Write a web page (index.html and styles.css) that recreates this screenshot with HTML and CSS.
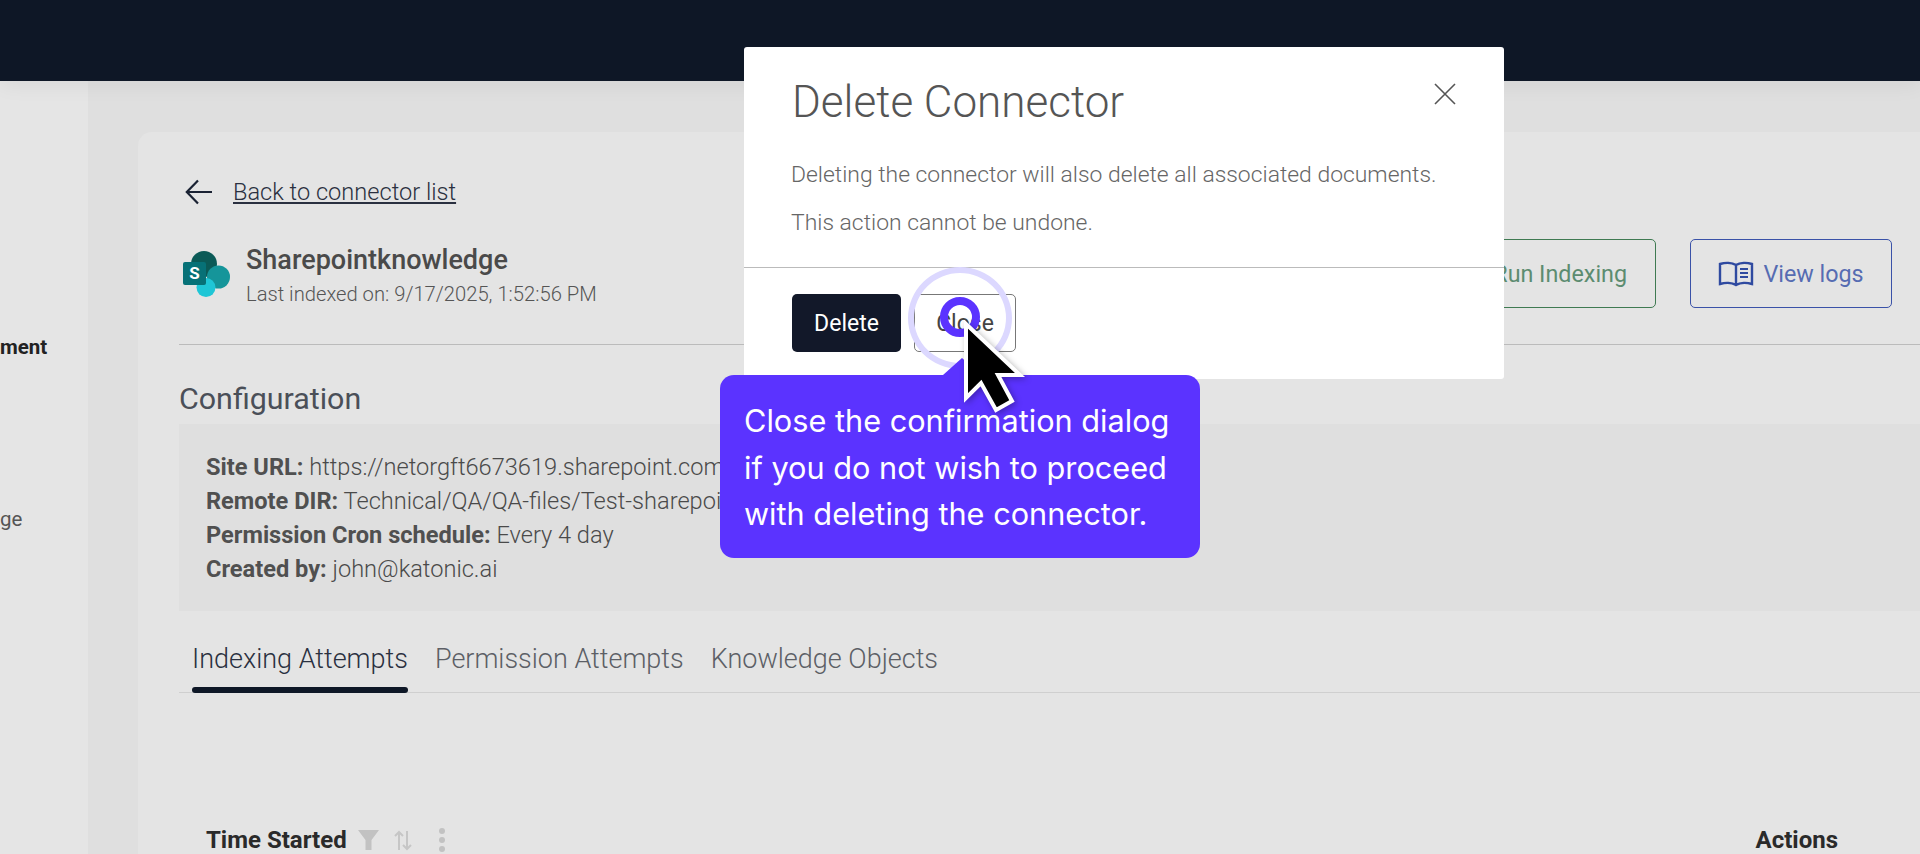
FILE: index.html
```html
<!DOCTYPE html>
<html lang="en">
<head>
    <meta charset="UTF-8">
    <meta name="viewport" content="width=device-width, initial-scale=1.0">
    <title>Delete Connector</title>
    <link rel="stylesheet" href="styles.css">
</head>
<body>
    <header class="topbar"></header>

    <div class="layout">
        <!-- Sidebar, cut off by the recording -->
        <aside class="sidebar">
            <div class="side-item side-active">ment</div>
            <div class="side-item">ge</div>
        </aside>

        <main class="content">
            <section class="panel">
                <a class="back-link" href="#">
                    <svg class="back-arrow" viewBox="0 0 28 26" width="28" height="26" fill="none" stroke="#1a2233" stroke-width="2.2">
                        <path d="M27 13H2M13 1.5 1.8 13 13 24.5"/>
                    </svg>
                    <span>Back to connector list</span>
                </a>

                <div class="connector-head">
                    <svg class="sp-logo" viewBox="0 0 48 48" width="48" height="48">
                        <circle cx="21" cy="13" r="13" fill="#0b5a57"/>
                        <circle cx="35.500" cy="26" r="11.500" fill="#15959a"/>
                        <circle cx="23" cy="36.500" r="9.500" fill="#1fc6d6"/>
                        <rect x="0" y="11" width="23" height="23" rx="2" fill="#077177"/>
                        <text x="11.500" y="28" class="sp-letter">S</text>
                    </svg>
                    <div class="connector-title">
                        <div class="connector-name">Sharepointknowledge</div>
                        <div class="connector-date">Last indexed on: 9/17/2025, 1:52:56 PM</div>
                    </div>
                    <div class="head-actions">
                        <button class="btn-outline btn-green">Run Indexing</button>
                        <button class="btn-outline btn-blue">
                            <svg viewBox="0 0 36 26" width="36" height="26" fill="none" stroke="#2f4aa0" stroke-width="2.4">
                                <path d="M18 4C14 1.500 7 1.500 2 3V23C7 21.500 14 21.500 18 24C22 21.500 29 21.500 34 23V3C29 1.500 22 1.500 18 4ZM18 4V24"/>
                                <path d="M22 8H30M22 12H30M22 16H30" stroke-width="2"/>
                            </svg>
                            View logs
                        </button>
                    </div>
                </div>

                <h2 class="section-title">Configuration</h2>
                <div class="config-box">
                    <div><b>Site URL:</b> https://netorgft6673619.sharepoint.com</div>
                    <div><b>Remote DIR:</b> Technical/QA/QA-files/Test-sharepoint</div>
                    <div><b>Permission Cron schedule:</b> Every 4 day</div>
                    <div><b>Created by:</b> john@katonic.ai</div>
                </div>

                <div class="tabs">
                    <div class="tab tab-active">Indexing Attempts</div>
                    <div class="tab">Permission Attempts</div>
                    <div class="tab">Knowledge Objects</div>
                </div>

                <div class="table-head">
                    <div class="col-time">
                        <b>Time Started</b>
                        <svg class="icon-filter" viewBox="0 0 21 20" width="21" height="20" fill="#c2c2c2"><path d="M0 0H21L13.500 10V20H7.500V10Z"/></svg>
                        <svg class="icon-sort" viewBox="0 0 18 21" width="18" height="21" fill="none" stroke="#c6c6c6" stroke-width="2"><path d="M5 20V2M1 6 5 2 9 6M13 1V19M9 15 13 19 17 15"/></svg>
                        <svg class="icon-dots" viewBox="0 0 8 24" width="8" height="24" fill="#c2c2c2"><circle cx="4" cy="3" r="3"/><circle cx="4" cy="12" r="3"/><circle cx="4" cy="21" r="3"/></svg>
                    </div>
                    <b class="col-actions">Actions</b>
                </div>
            </section>
        </main>
    </div>

    <!-- Confirmation dialog -->
    <div class="modal">
        <div class="modal-head">
            <h1>Delete Connector</h1>
            <svg class="modal-close" viewBox="0 0 22 22" width="22" height="22" fill="none" stroke="#555" stroke-width="1.600">
                <path d="M1 1 21 21M21 1 1 21"/>
            </svg>
        </div>
        <div class="modal-body">
            <p>Deleting the connector will also delete all associated documents.</p>
            <p>This action cannot be undone.</p>
        </div>
        <div class="modal-foot">
            <button class="btn-dark">Delete</button>
            <button class="btn-light">Close</button>
        </div>
    </div>

    <!-- Walkthrough overlay -->
    <div class="guide-ring"></div>
    <div class="guide-dot"></div>
    <div class="tooltip">
        <span class="tooltip-arrow"></span>
        Close the confirmation dialog if you do not wish to proceed with deleting the connector.
    </div>
    <svg class="cursor" viewBox="0 0 66 94" width="66" height="94">
        <path d="M6 4 60 55H38L52 81 36 90 21 63 6 78Z" fill="#000" stroke="#fff" stroke-width="4"/>
    </svg>
</body>
</html>
```

FILE: styles.css
```css
* {
    box-sizing: border-box;
}
body {
    margin: 0;
    height: 854px;
    overflow: hidden;
    background-color: #dfdfdf;
    font-family: Roboto, "Liberation Sans", sans-serif;
    color: #4a4a4a;
}
.topbar {
    height: 81px;
    background-color: #0e1726;
    box-shadow: 0 4px 20px rgba(0, 0, 0, 0.06);
    position: relative;
}
.layout {
    display: flex;
    height: 773px;
}
.sidebar {
    width: 88px;
    flex-shrink: 0;
    padding-top: 255px;
    background-color: #e5e5e5;
    font-size: 20.500px;
}
.side-item {
    height: 23px;
    line-height: 23px;
    color: #555;
}
.side-active {
    margin-bottom: 149px;
    font-weight: 700;
    color: #222;
}
.content {
    flex: 1;
    min-width: 0;
    padding: 51px 0 0 50px;
}
.panel {
    height: 100%;
    padding: 47px 0 0 41px;
    background-color: #e4e4e4;
    border-radius: 14px 0 0 0;
}
.back-link {
    display: flex;
    align-items: center;
    gap: 20px;
    height: 26px;
    margin-left: 6px;
    font-size: 23.600px;
    font-weight: 300;
    color: #2a3040;
    text-decoration: none;
}
.back-link span {
    text-decoration: underline;
}
.connector-head {
    display: flex;
    align-items: center;
    height: 69px;
    margin-top: 34px;
}
.sp-logo {
    flex-shrink: 0;
    margin: 3px 15px 0 4px;
}
.sp-letter {
    fill: #fff;
    font-size: 17px;
    font-weight: 700;
    text-anchor: middle;
}
.connector-title {
    flex: 1;
    margin-top: 3px;
}
.connector-name {
    font-size: 27px;
    font-weight: 500;
    line-height: 30px;
}
.connector-date {
    margin-top: 8px;
    font-size: 20.200px;
    font-weight: 300;
    line-height: 22px;
    color: #555;
}
.head-actions {
    display: flex;
    gap: 34px;
    margin-right: 28px;
}
.btn-outline {
    display: flex;
    align-items: center;
    justify-content: center;
    gap: 9px;
    height: 69px;
    background: none;
    border-radius: 5px;
    font-family: inherit;
    font-size: 23.300px;
}
.btn-green {
    width: 212px;
    justify-content: flex-end;
    padding-right: 28px;
    border: 1.5px solid #3f7a52;
    color: #5c8c70;
}
.btn-blue {
    width: 202px;
    border: 1.5px solid #3a52a8;
    color: #566cb2;
}
.section-title {
    margin: 36px 0 0;
    padding-top: 35px;
    border-top: 1px solid #bbb;
    font-size: 30.400px;
    font-weight: 400;
    line-height: 38px;
    color: #4a4f58;
}
.config-box {
    height: 187px;
    margin-top: 6px;
    padding: 26px 27px;
    background-color: #dfdfdf;
    font-size: 23.600px;
    font-weight: 300;
    line-height: 34px;
    white-space: nowrap;
}
.config-box b {
    font-weight: 700;
    color: #505050;
}
.tabs {
    display: flex;
    gap: 27px;
    height: 82px;
    padding: 30px 0 0 13px;
    border-bottom: 1px solid #cfcfcf;
    font-size: 27px;
    font-weight: 300;
}
.tab {
    line-height: 36px;
    color: #5c5f66;
}
.tab-active {
    position: relative;
    color: #2a3040;
}
.tab-active::after {
    content: "";
    position: absolute;
    left: 0;
    right: 0;
    bottom: -1px;
    height: 6px;
    background-color: #0e1726;
    border-radius: 4px;
}
.table-head {
    display: flex;
    justify-content: space-between;
    margin-top: 133px;
    padding: 0 82px 0 27px;
    font-size: 24px;
    line-height: 28px;
    color: #2a2a2a;
}
.col-time {
    display: flex;
    align-items: center;
}
.icon-filter {
    margin-left: 11px;
}
.icon-sort {
    margin-left: 15px;
}
.icon-dots {
    margin-left: 26px;
}
.modal {
    position: absolute;
    left: 744px;
    top: 47px;
    width: 760px;
    height: 332px;
    background-color: #fff;
    border-radius: 3px;
}
.modal-head {
    display: flex;
    justify-content: space-between;
    padding: 28px 48px 0;
}
.modal-head h1 {
    margin: 0;
    font-size: 44px;
    font-weight: 300;
    line-height: 54px;
    color: #555;
}
.modal-close {
    margin-top: 8px;
}
.modal-body {
    padding: 32px 47px 0;
    font-size: 22.900px;
    font-weight: 300;
    color: #666;
}
.modal-body p {
    margin: 0 0 21px;
    line-height: 27px;
}
.modal-foot {
    display: flex;
    gap: 13px;
    margin-top: 31px;
    padding: 26px 48px 0;
    border-top: 1px solid #bbb;
}
.btn-dark,
.btn-light {
    height: 58px;
    border-radius: 5px;
    font-family: inherit;
    font-size: 23px;
}
.btn-dark {
    width: 109px;
    background-color: #121829;
    border: none;
    color: #fff;
}
.btn-light {
    width: 102px;
    background-color: #fff;
    border: 1.5px solid #777;
    color: #444;
}
.guide-ring {
    position: absolute;
    left: 908px;
    top: 267px;
    width: 104px;
    height: 102px;
    border: 6px solid #dcd8ff;
    border-radius: 50%;
}
.guide-dot {
    position: absolute;
    left: 940px;
    top: 297px;
    width: 40px;
    height: 40px;
    border: 8px solid #5b33ff;
    border-radius: 50%;
}
.tooltip {
    position: absolute;
    left: 720px;
    top: 375px;
    width: 480px;
    height: 183px;
    padding: 23px 24px;
    background-color: #5b33ff;
    border-radius: 14px;
    font-family: Inter, "Liberation Sans", sans-serif;
    font-size: 30.700px;
    line-height: 46.500px;
    color: #fff;
}
.tooltip-arrow {
    position: absolute;
    left: 223px;
    top: -17px;
    width: 0;
    height: 0;
    border-left: 19px solid transparent;
    border-right: 19px solid transparent;
    border-bottom: 17px solid #5b33ff;
}
.cursor {
    position: absolute;
    left: 960px;
    top: 320px;
    filter: drop-shadow(2px 2px 3px rgba(0, 0, 0, 0.3));
}
```
